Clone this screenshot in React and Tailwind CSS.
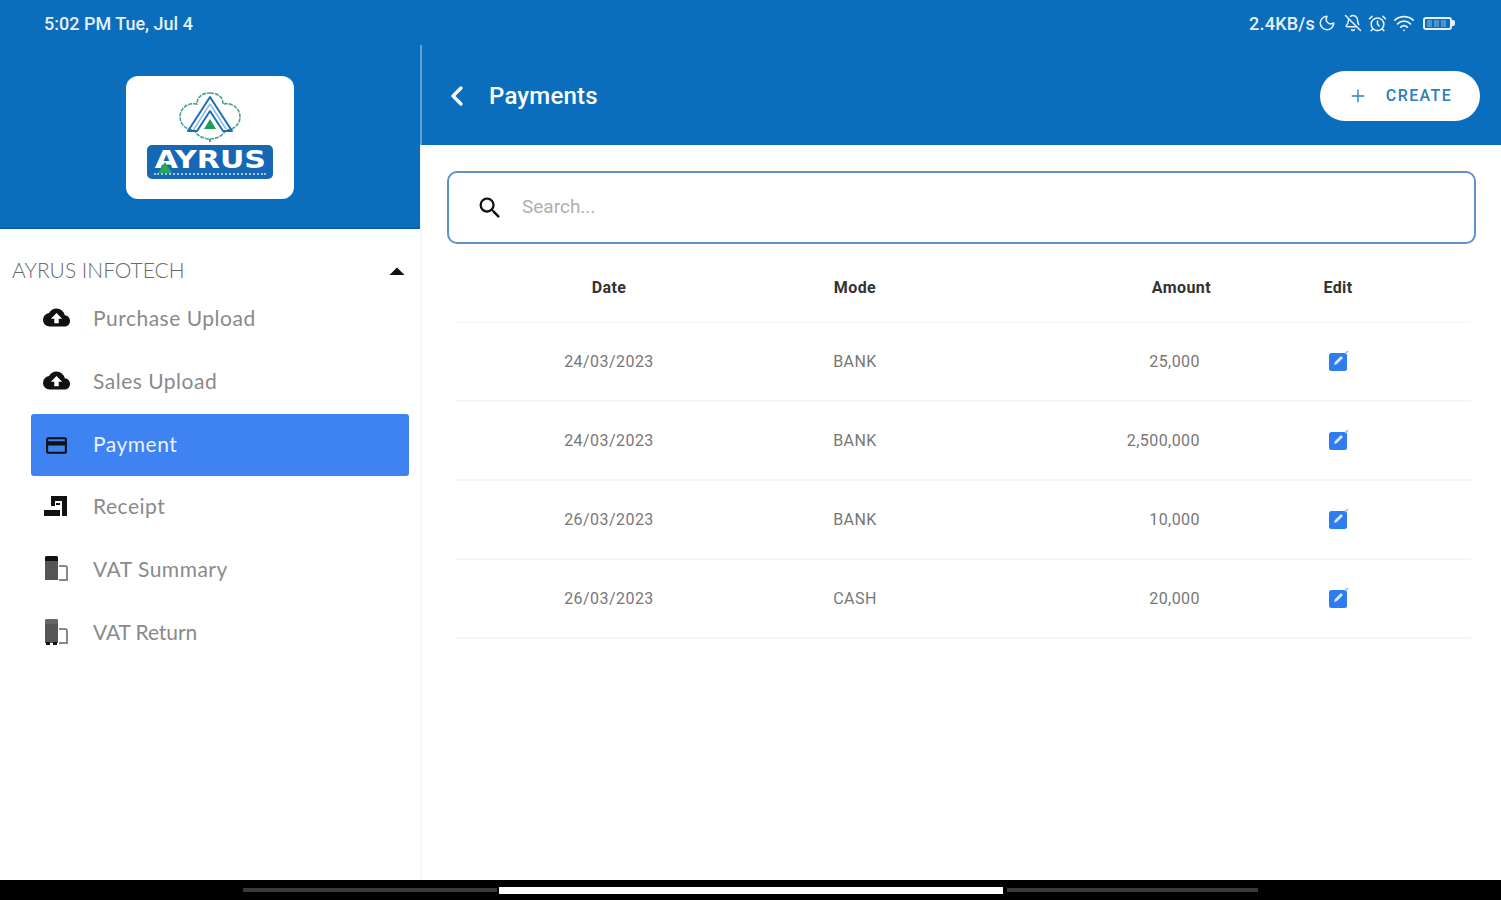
import React from 'react';
import { ChevronLeft, Plus, Moon, BellOff, AlarmClock, Wifi } from 'lucide-react';
import { MdCloudUpload, MdPayment, MdArrowDropUp, MdSearch } from 'react-icons/md';

const ReceiptIcon = () => (
    <svg width="26" height="26" viewBox="0 0 26 26" fill="#111">
        <path d="M8 3h16v20h-5V8H12v5H8z" />
        <path d="M13 10h4v2h-4z" />
        <path d="M1 17h16v6H1z" />
    </svg>
);

const VatIcon = ({ wheels }) => (
    <svg width="26" height="28" viewBox="0 0 26 28">
        <path d="M2 3a2 2 0 0 1 2-2h9a2 2 0 0 1 2 2v22H2z" fill="#555" />
        <path d="M2 3a2 2 0 0 1 2-2h9a2 2 0 0 1 2 2v3H2z" fill={wheels ? '#666' : '#111'} />
        <path d="M16 11h6a2 2 0 0 1 2 2v12h-8" fill="none" stroke="#888" strokeWidth="2" />
        {wheels && <path d="M3 24h4v3H3zM10 24h4v3h-4z" fill="#111" />}
    </svg>
);

const Logo = () => (
    <div className="flex flex-col items-center pb-[5px]">
        <svg width="62" height="50" viewBox="0 0 62 50" fill="none">
            <path d="M31 1C40 1 44 6 44 12C54 10 61 17 61 25C61 33 54 38 47 38C44 44 37 47 31 47C25 47 18 44 15 38C8 38 1 33 1 25C1 17 8 10 18 12C18 6 22 1 31 1Z" stroke="#4f9f92" strokeWidth="1.6" strokeDasharray="4 1" fill="#fff" />
            <path d="M31 5L53 39H44L31 19L18 39H9Z" stroke="#1b6fb8" strokeWidth="2" strokeLinejoin="round" />
            <path d="M31 12L47 37M31 12L15 37" stroke="#8fb9de" strokeWidth="1.4" />
            <path d="M31 27l6 10H25z" fill="#1f9d55" />
            <path d="M31 47v3" stroke="#4f9f92" strokeWidth="2" />
        </svg>
        <div className="relative w-[126px] h-[34px] mt-[3px] bg-[#1768b4] rounded-[5px] flex flex-col items-center">
            <span className="mt-[2px] text-white text-[25px] leading-[26px] font-bold font-['DejaVu_Sans',sans-serif] scale-x-[1.2]">AYRUS</span>
            <span className="w-[112px] border-t-2 border-dotted border-[#9cc4e8]"></span>
            <svg className="absolute left-[11px] top-[17px]" width="14" height="11" viewBox="0 0 14 11">
                <path d="M7 0l7 11H0z" fill="#2aa35c" />
            </svg>
        </div>
    </div>
);

const menu = [
    { label: 'Purchase Upload', icon: <MdCloudUpload size={27} color="#111" />, track: 'tracking-[0.5px]' },
    { label: 'Sales Upload', icon: <MdCloudUpload size={27} color="#111" />, track: 'tracking-[0.5px]' },
    { label: 'Payment', icon: <MdPayment size={25} color="#111" />, track: 'tracking-[0.5px]', active: true },
    { label: 'Receipt', icon: <ReceiptIcon />, track: 'tracking-[0.5px]' },
    { label: 'VAT Summary', icon: <VatIcon />, track: 'tracking-[0.5px]' },
    { label: 'VAT Return', icon: <VatIcon wheels />, track: 'tracking-[-0.1px]' },
];

const rows = [
    { date: '24/03/2023', mode: 'BANK', amount: '25,000' },
    { date: '24/03/2023', mode: 'BANK', amount: '2,500,000' },
    { date: '26/03/2023', mode: 'BANK', amount: '10,000' },
    { date: '26/03/2023', mode: 'CASH', amount: '20,000' },
];

const EditIcon = () => (
    <svg width="24" height="24" viewBox="0 0 24 24">
        <rect x="3" y="4" width="18" height="18" rx="2.5" fill="#2f7bf0" />
        <path d="M8 16l1-3 6-6 2 2-6 6z" fill="#dbe8fd" />
        <path d="M19 5l3-3" stroke="#8db6f5" strokeWidth="1.5" />
    </svg>
);

const gridCols = 'grid grid-cols-[308px_184px_264px_254px_1fr] items-center';

export default function App() {
    return (
        <div className="h-[900px] flex flex-col bg-white overflow-hidden font-['Roboto',sans-serif]">
            <div className="h-[45px] shrink-0 bg-[#0a6ebd] flex items-center justify-between pl-[44px] pr-[46px] pt-[1px] text-[#e6f0f8]">
                <span className="text-[18px] font-medium">5:02 PM Tue, Jul 4</span>
                <div className="flex items-center gap-[5px]">
                    <span className="text-[18px] font-medium tracking-[0.2px] -mr-[2px]">2.4KB/s</span>
                    <Moon size={18} />
                    <BellOff size={18} className="ml-[3px]" />
                    <AlarmClock size={19} className="ml-[1px]" />
                    <Wifi size={22} className="ml-[1px]" />
                    <div className="ml-[3px] flex items-center">
                        <div className="w-[29px] h-[13px] border-2 border-[#e6f0f8] rounded-[3px] flex items-center gap-[2px] px-[2px]">
                            <span className="w-[5px] h-[7px] bg-[#4d94cf]"></span>
                            <span className="w-[5px] h-[7px] bg-[#4d94cf]"></span>
                            <span className="w-[5px] h-[7px] bg-[#4d94cf]"></span>
                        </div>
                        <span className="w-[3px] h-[6px] bg-[#e6f0f8] rounded-r-[2px]"></span>
                    </div>
                </div>
            </div>

            <div className="flex-1 flex min-h-0">
                <aside className="w-[420px] shrink-0">
                    <div className="h-[184px] bg-[#0a6ebd] border-b-2 border-[#0860a8] pt-[31px] flex justify-center">
                        <div className="w-[168px] h-[123px] bg-white rounded-[12px] flex items-center justify-center">
                            <Logo />
                        </div>
                    </div>
                    <div className="pl-[12px] pr-[12px] mt-[24px] flex items-center justify-between h-[34px]">
                        <span className="text-[21px] font-['Lato',sans-serif] font-light text-[#6a6a6a]">AYRUS INFOTECH</span>
                        <MdArrowDropUp size={36} color="#111" className="-mr-[7px] mt-[3px]" />
                    </div>
                    <div className="pl-[31px] pr-[11px] flex flex-col -mt-[1px]">
                        {menu.map((item) => (
                            <div
                                key={item.label}
                                className={`flex items-center pl-[11px] ${item.active ? 'h-[62px] mt-[2px] -mb-[2px] bg-[#3f83f2] rounded-[3px] text-[#eaf2fe]' : 'h-[63px] text-[#8a8a8a]'}`}
                            >
                                <span className="w-[28px] flex justify-center shrink-0">{item.icon}</span>
                                <span className={`ml-[23px] text-[21px] font-['Lato',sans-serif] ${item.track} ${item.active ? '-mt-[2px]' : ''}`}>{item.label}</span>
                            </div>
                        ))}
                    </div>
                </aside>

                <main className="flex-1 min-w-0 border-l-2 border-[#f4f6f8]">
                    <div className="h-[100px] -ml-[2px] border-l-2 border-[#5f9fd4] bg-[#0a6ebd] flex items-center pl-[19px] pr-[21px] pt-[2px]">
                        <ChevronLeft size={32} color="#fff" strokeWidth={2.5} />
                        <h1 className="ml-[16px] text-[24px] font-medium tracking-[0.2px] text-white">Payments</h1>
                        <button className="ml-auto w-[160px] h-[50px] bg-white rounded-full flex items-center justify-center gap-[18px] text-[#2a7fc1]">
                            <Plus size={20} strokeWidth={1.6} />
                            <span className="text-[16px] font-medium tracking-[1.4px]">CREATE</span>
                        </button>
                    </div>

                    <div className="pl-[25px] pr-[25px] pt-[26px]">
                        <div className="h-[73px] border-2 border-[#5f93c6] rounded-[10px] flex items-center pl-[27px]">
                            <MdSearch size={28} color="#111" />
                            <span className="ml-[18px] text-[19px] text-[#b0b0b0]">Search...</span>
                        </div>

                        <div className="ml-[8px] mr-[5px] mt-[10px]">
                            <div className={`${gridCols} h-[69px] border-b border-[#f6f6f6] text-[16px] font-bold tracking-[0.4px] text-[#333]`}>
                                <div className="text-center">Date</div>
                                <div className="text-center">Mode</div>
                                <div className="text-right">Amount</div>
                                <div className="text-center">Edit</div>
                            </div>
                            {rows.map((row, i) => (
                                <div key={i} className={`${gridCols} h-[79px] border-b-2 border-[#f5f5f5] text-[16px] tracking-[0.45px] text-[#777]`}>
                                    <div className="text-center">{row.date}</div>
                                    <div className="text-center">{row.mode}</div>
                                    <div className="text-right pr-[11px]">{row.amount}</div>
                                    <div className="flex justify-center -mt-[2px]"><EditIcon /></div>
                                </div>
                            ))}
                        </div>
                    </div>
                </main>
            </div>

            <div className="h-[20px] shrink-0 bg-black flex items-center justify-center">
                <span className="w-[254px] h-[4px] bg-[#3a3a3a]"></span>
                <span className="w-[504px] h-[7px] bg-white ml-[2px] mr-[4px]"></span>
                <span className="w-[251px] h-[4px] bg-[#3a3a3a]"></span>
            </div>
        </div>
    );
}
